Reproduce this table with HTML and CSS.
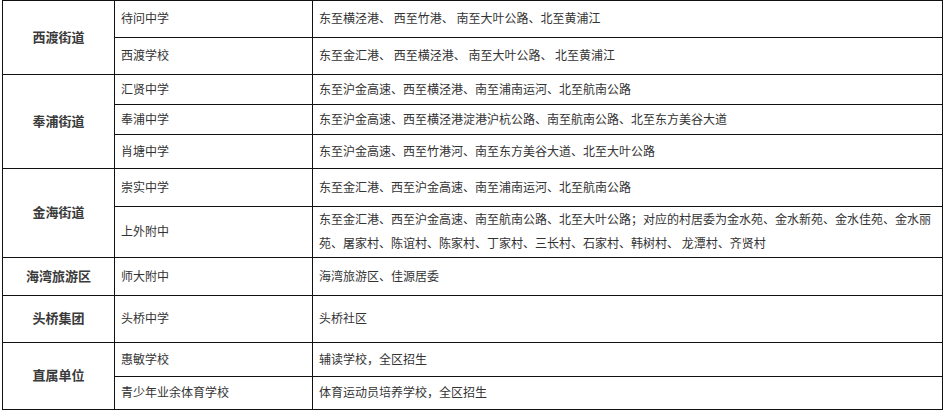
FILE: index.html
```html
<!DOCTYPE html>
<html lang="zh-CN">
<head>
<meta charset="utf-8">
<title>学区划分</title>
<link rel="stylesheet" href="styles.css">
</head>
<body>
<table class="zone-table">
  <colgroup>
    <col class="c-district">
    <col class="c-school">
    <col class="c-area">
  </colgroup>
  <tbody>
    <tr class="h37">
      <td class="district" rowspan="2">西渡街道</td>
      <td>待问中学</td>
      <td>东至横泾港、 西至竹港、 南至大叶公路、北至黄浦江</td>
    </tr>
    <tr class="h37">
      <td>西渡学校</td>
      <td>东至金汇港、 西至横泾港、 南至大叶公路、 北至黄浦江</td>
    </tr>
    <tr class="h30">
      <td class="district" rowspan="3">奉浦街道</td>
      <td>汇贤中学</td>
      <td>东至沪金高速、西至横泾港、南至浦南运河、北至航南公路</td>
    </tr>
    <tr class="h30">
      <td>奉浦中学</td>
      <td>东至沪金高速、西至横泾港淀港沪杭公路、南至航南公路、北至东方美谷大道</td>
    </tr>
    <tr class="h34">
      <td>肖塘中学</td>
      <td>东至沪金高速、西至竹港河、南至东方美谷大道、北至大叶公路</td>
    </tr>
    <tr class="h38">
      <td class="district" rowspan="2">金海街道</td>
      <td>崇实中学</td>
      <td>东至金汇港、西至沪金高速、南至浦南运河、北至航南公路</td>
    </tr>
    <tr class="h51">
      <td>上外附中</td>
      <td>东至金汇港、西至沪金高速、南至航南公路、北至大叶公路；对应的村居委为金水苑、金水新苑、金水佳苑、金水丽苑、屠家村、陈谊村、陈家村、丁家村、三长村、石家村、韩树村、 龙潭村、齐贤村</td>
    </tr>
    <tr class="h38">
      <td class="district">海湾旅游区</td>
      <td>师大附中</td>
      <td>海湾旅游区、佳源居委</td>
    </tr>
    <tr class="h47">
      <td class="district">头桥集团</td>
      <td>头桥中学</td>
      <td>头桥社区</td>
    </tr>
    <tr class="h34">
      <td class="district" rowspan="2">直属单位</td>
      <td>惠敏学校</td>
      <td>辅读学校，全区招生</td>
    </tr>
    <tr class="h33">
      <td>青少年业余体育学校</td>
      <td>体育运动员培养学校，全区招生</td>
    </tr>
  </tbody>
</table>
</body>
</html>
```
FILE: styles.css
```css
html, body {
  margin: 0;
  padding: 0;
  background: #fff;
}

body {
  padding: 0 0 0 2px;
  font-family: "Noto Sans CJK SC", "Noto Sans", sans-serif;
  font-size: 12px;
  color: #333;
}

.zone-table {
  border-collapse: collapse;
  table-layout: fixed;
  width: 940px;
}

.c-district { width: 112px; }
.c-school { width: 198px; }
.c-area { width: 630px; }

.zone-table td {
  border: 1px solid #111;
  padding: 0 10px 2px 6px;
  vertical-align: middle;
  line-height: 24px;
  text-align: left;
}

.zone-table td.district {
  text-align: center;
  font-weight: bold;
  font-size: 13px;
  color: #3a3a3a;
  padding: 0 0 2px 0;
}

.h30 { height: 30px; }
.h33 { height: 33px; }
.h34 { height: 34px; }
.h37 { height: 37px; }
.h38 { height: 38px; }
.h47 { height: 47px; }
.h51 { height: 51px; }
```
